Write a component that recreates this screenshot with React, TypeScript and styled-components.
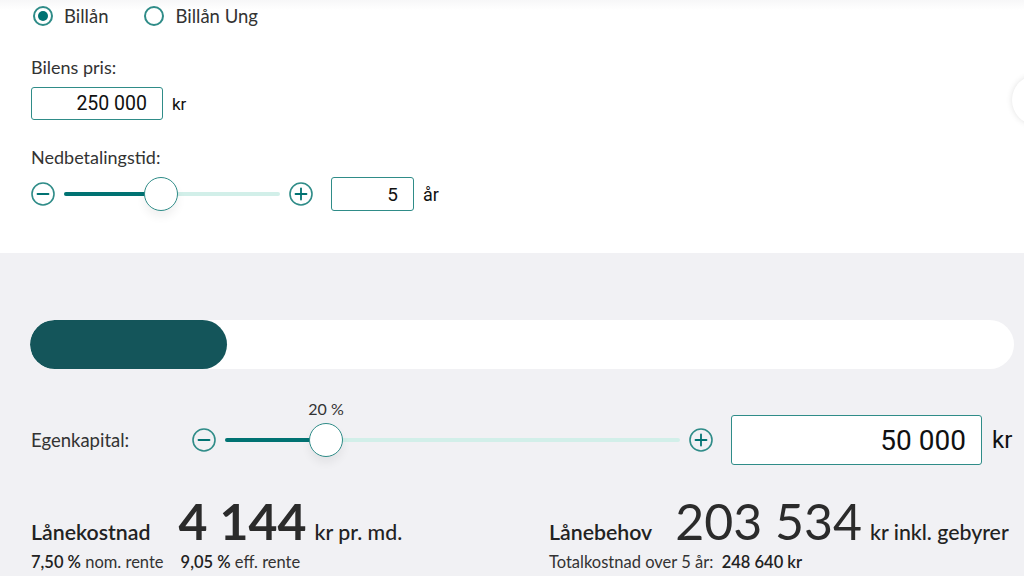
import { createGlobalStyle, styled } from 'styled-components';

const teal = '#2f8c88';
const tealDark = '#007272';
const tealLight = '#d2efe9';
const text = '#333333';

const GlobalStyle = createGlobalStyle`
  html, body {
    margin: 0;
    padding: 0;
    background: #f1f1f4;
  }
  body {
    font-family: Lato, 'Open Sans', sans-serif;
    color: ${text};
    overflow: hidden;
  }
`;

const Page = styled.div`
  width: 1024px;
  height: 576px;
  overflow: hidden;
  display: flex;
  flex-direction: column;
`;

const TopPanel = styled.section`
  position: relative;
  height: 253px;
  box-sizing: border-box;
  padding: 0 31px;
  background: linear-gradient(#f7f7f8 0, #ffffff 10px);
`;

const RadioRow = styled.div`
  display: flex;
  align-items: center;
  height: 32px;
  gap: 36px;
  padding-left: 2px;
`;

const RadioOption = styled.label`
  display: flex;
  align-items: center;
  gap: 11px;
  font-size: 18.5px;
  color: ${text};
`;

const RadioCircle = styled.span<{ $checked: boolean }>`
  position: relative;
  width: 20px;
  height: 20px;
  box-sizing: border-box;
  border: 2px solid ${teal};
  border-radius: 50%;
  &:after {
    content: '';
    display: ${(p) => (p.$checked ? 'block' : 'none')};
    position: absolute;
    inset: 3px;
    border-radius: 50%;
    background: ${tealDark};
  }
`;

const FieldLabel = styled.div<{ $top: number }>`
  margin-top: ${(p) => p.$top}px;
  font-size: 18px;
  line-height: 24px;
  color: ${text};
`;

const Row = styled.div<{ $top: number }>`
  display: flex;
  align-items: center;
  margin-top: ${(p) => p.$top}px;
`;

const NumberBox = styled.div<{ $width: number; $height: number; $size: number }>`
  width: ${(p) => p.$width}px;
  height: ${(p) => p.$height}px;
  box-sizing: border-box;
  border: 1.5px solid ${teal};
  border-radius: 3px;
  background: #fff;
  display: flex;
  align-items: center;
  justify-content: flex-end;
  padding-right: 15px;
  font-family: Roboto, 'Liberation Sans', sans-serif;
  font-size: ${(p) => p.$size}px;
  color: #111;
`;

const Unit = styled.span<{ $size: number; $gap: number }>`
  margin-left: ${(p) => p.$gap}px;
  font-family: Roboto, 'Liberation Sans', sans-serif;
  font-size: ${(p) => p.$size}px;
  color: #111;
`;

const StepButton = styled.button`
  width: 24px;
  height: 24px;
  padding: 0;
  border: none;
  background: transparent;
  display: flex;
  align-items: center;
  justify-content: center;
  flex-shrink: 0;
  cursor: pointer;
`;

const Track = styled.div<{ $width: number }>`
  position: relative;
  width: ${(p) => p.$width}px;
  height: 4px;
  margin: 0 9px;
  border-radius: 2px;
  background: ${tealLight};
`;

const TrackFill = styled.div`
  position: absolute;
  left: 0;
  top: 0;
  bottom: 0;
  border-radius: 2px;
  background: ${tealDark};
`;

const Thumb = styled.div`
  position: absolute;
  top: 50%;
  width: 34px;
  height: 34px;
  box-sizing: border-box;
  margin-left: -17px;
  margin-top: -17px;
  border: 1.5px solid ${teal};
  border-radius: 50%;
  background: #fff;
  box-shadow: 0 6px 10px rgba(0, 0, 0, 0.06);
`;

const ThumbLabel = styled.span`
  position: absolute;
  bottom: 38px;
  left: 50%;
  transform: translateX(-50%);
  white-space: nowrap;
  font-size: 16px;
  color: ${text};
`;

const CarouselButton = styled.div`
  position: absolute;
  top: 75px;
  right: -38px;
  width: 50px;
  height: 50px;
  border-radius: 50%;
  background: #fff;
  box-shadow: 0 0 6px rgba(0, 0, 0, 0.12);
`;

const LowerPanel = styled.section`
  flex: 1;
  background: #f1f1f4;
  padding: 67px 10px 0 30px;
`;

const ProgressBar = styled.div`
  height: 49px;
  border-radius: 25px;
  background: #fff;
  overflow: hidden;
`;

const ProgressFill = styled.div`
  height: 100%;
  border-radius: 25px;
  background: #14555a;
`;

const EquityRow = styled.div`
  display: flex;
  align-items: center;
  margin-top: 46px;
  padding-left: 1px;
`;

const EquityLabel = styled.span`
  width: 161px;
  font-size: 18.5px;
  color: ${text};
`;

const Results = styled.div`
  display: grid;
  grid-template-columns: 465px 465px;
  column-gap: 53px;
  margin-top: 31px;
  padding-left: 1px;
`;

const ResultBlock = styled.div`
  display: flex;
  flex-direction: column;
`;

const Headline = styled.div`
  display: flex;
  align-items: baseline;
  white-space: nowrap;
`;

const HeadTitle = styled.span`
  font-size: 21.3px;
  font-weight: 600;
  color: #222;
`;

const BigNumber = styled.span<{ $bold: boolean }>`
  margin: 0 8px 0 ${(p) => (p.$bold ? 28 : 23)}px;
  font-size: 50px;
  line-height: 50px;
  font-weight: ${(p) => (p.$bold ? 700 : 400)};
  color: #2b2b2b;
`;

const HeadUnit = styled.span`
  font-size: 21.3px;
  font-weight: 500;
  color: #222;
`;

const SubLine = styled.div`
  display: flex;
  gap: 17px;
  margin-top: 6px;
  font-size: 16.5px;
  color: #333;
  white-space: nowrap;
`;

const Strong = styled.b`
  font-weight: 600;
  color: #222;
`;

const CircleIcon = ({ plus }: { plus?: boolean }) => (
  <svg width="24" height="24" viewBox="0 0 24 24" fill="none">
    <circle cx="12" cy="12" r="11" stroke={teal} strokeWidth="1.6" />
    <path d="M6.5 12h11" stroke={tealDark} strokeWidth="1.8" strokeLinecap="round" />
    {plus && <path d="M12 6.5v11" stroke={tealDark} strokeWidth="1.8" strokeLinecap="round" />}
  </svg>
);

type SliderProps = {
  width: number;
  percent: number;
  label?: string;
};

const Slider = ({ width, percent, label }: SliderProps) => (
  <>
    <StepButton aria-label="minus">
      <CircleIcon />
    </StepButton>
    <Track $width={width}>
      <TrackFill style={{ width: `${percent}%` }} />
      <Thumb style={{ left: `${percent}%` }}>{label && <ThumbLabel>{label}</ThumbLabel>}</Thumb>
    </Track>
    <StepButton aria-label="plus">
      <CircleIcon plus />
    </StepButton>
  </>
);

export default function App() {
  return (
    <Page>
      <GlobalStyle />
      <TopPanel>
        <RadioRow>
          <RadioOption>
            <RadioCircle $checked />
            Billån
          </RadioOption>
          <RadioOption>
            <RadioCircle $checked={false} />
            Billån Ung
          </RadioOption>
        </RadioRow>

        <FieldLabel $top={23}>Bilens pris:</FieldLabel>
        <Row $top={8}>
          <NumberBox $width={132} $height={33} $size={19.5}>
            250 000
          </NumberBox>
          <Unit $size={17} $gap={9}>kr</Unit>
        </Row>

        <FieldLabel $top={25}>Nedbetalingstid:</FieldLabel>
        <Row $top={8}>
          <Slider width={216} percent={45} />
          <NumberBox $width={83} $height={34} $size={19} style={{ marginLeft: 18 }}>
            5
          </NumberBox>
          <Unit $size={18} $gap={9}>år</Unit>
        </Row>

        <CarouselButton />
      </TopPanel>

      <LowerPanel>
        <ProgressBar>
          <ProgressFill style={{ width: '20%' }} />
        </ProgressBar>

        <EquityRow>
          <EquityLabel>Egenkapital:</EquityLabel>
          <Slider width={455} percent={22.2} label="20 %" />
          <NumberBox $width={251} $height={50} $size={28} style={{ marginLeft: 18 }}>
            50 000
          </NumberBox>
          <Unit $size={24} $gap={10}>kr</Unit>
        </EquityRow>

        <Results>
          <ResultBlock>
            <Headline>
              <HeadTitle>Lånekostnad</HeadTitle>
              <BigNumber $bold>4 144</BigNumber>
              <HeadUnit>kr pr. md.</HeadUnit>
            </Headline>
            <SubLine>
              <span>
                <Strong>7,50 %</Strong> nom. rente
              </span>
              <span>
                <Strong>9,05 %</Strong> eff. rente
              </span>
            </SubLine>
          </ResultBlock>
          <ResultBlock>
            <Headline>
              <HeadTitle>Lånebehov</HeadTitle>
              <BigNumber $bold={false}>203 534</BigNumber>
              <HeadUnit>kr inkl. gebyrer</HeadUnit>
            </Headline>
            <SubLine>
              <span>
                Totalkostnad over 5 år:&nbsp; <Strong>248 640 kr</Strong>
              </span>
            </SubLine>
          </ResultBlock>
        </Results>
      </LowerPanel>
    </Page>
  );
}
